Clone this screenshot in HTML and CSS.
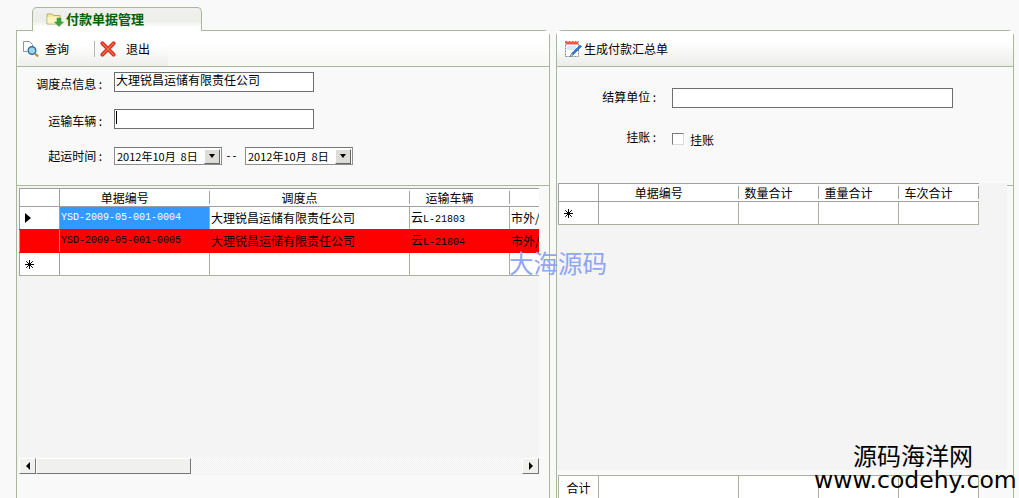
FILE: index.html
```html
<!DOCTYPE html>
<html lang="zh-CN">
<head>
<meta charset="utf-8">
<title>付款单据管理</title>
<link rel="stylesheet" href="styles.css">
</head>
<body>
<div class="page">
  <div class="tabs">
    <div class="tab">
      <svg class="ic16" viewBox="0 0 18 16"><path d="M1 3h5l1.500 1.500H14V13H1z" fill="#f7e89a" stroke="#b9ad6a"/><path d="M1.500 6h12v6.500h-12z" fill="#fdf6c4"/><path d="M11 7h4v4h2.500L13 15.500 8.500 11H11z" fill="#3da33d" stroke="#2c8a2c" stroke-width=".5"/></svg>
      <span>付款单据管理</span>
    </div>
  </div>
  <div class="columns">
    <section class="panel panel-left">
      <div class="toolbar">
        <div class="tools">
          <button class="tool tool-query">
            <svg class="ic16" viewBox="0 0 18 18"><path d="M1.500 1.500h6l3 3v3M1.500 1.500v10h4" fill="#fff" stroke="#8a96a8"/><circle cx="10" cy="10.500" r="3.800" fill="#9fd4f2" stroke="#2f6f9f" stroke-width="1.400"/><path d="M13 13.500l3 3" stroke="#b08a2a" stroke-width="2"/></svg>
            <span>查询</span>
          </button>
          <i class="tool-sep"></i>
          <button class="tool tool-exit">
            <svg class="ic16" viewBox="0 0 16 16"><path d="M3 3l10 10M13 3L3 13" stroke="#d8341c" stroke-width="3.600" stroke-linecap="round"/><path d="M3 3l10 10M13 3L3 13" stroke="#f47a55" stroke-width="1" stroke-linecap="round"/></svg>
            <span>退出</span>
          </button>
        </div>
      </div>
      <div class="form form-left">
        <div class="row row-a">
          <label class="lab lab-info">调度点信息&#8201;:</label>
          <div class="input">大理锐昌运储有限责任公司</div>
        </div>
        <div class="row row-b">
          <label class="lab lab-car">运输车辆&#8201;:</label>
          <div class="input"><i class="caret"></i></div>
        </div>
        <div class="row row-c">
          <label class="lab lab-date">起运时间&#8201;:</label>
          <div class="date"><span>2012年10月&nbsp; 8日</span><b class="drop"><i></i></b></div>
          <span class="dash">--</span>
          <div class="date"><span>2012年10月&nbsp; 8日</span><b class="drop"><i></i></b></div>
        </div>
      </div>
      <div class="grid-left">
        <div class="grid-clip">
          <table class="grid g-left">
            <colgroup><col class="c40"><col class="c150"><col class="c200"><col class="c100"><col class="c100"></colgroup>
            <tr class="hd"><th></th><th>单据编号</th><th>调度点</th><th>运输车辆</th><th></th></tr>
            <tr class="above-red"><td class="rh"><i class="arrow"></i></td><td class="code sel">YSD-2009-05-001-0004</td><td>大理锐昌运储有限责任公司</td><td>云<span class="mono">L-21803</span></td><td>市外/市内</td></tr>
            <tr class="red"><td class="rh"></td><td class="code">YSD-2009-05-001-0005</td><td>大理锐昌运储有限责任公司</td><td>云<span class="mono">L-21804</span></td><td>市外/市内</td></tr>
            <tr><td class="rh"><svg class="star" viewBox="0 0 9 9"><path d="M4.500 0v9M0 4.500h9M1.200 1.200l6.600 6.600M7.800 1.200L1.200 7.800" stroke="#000" stroke-width="1" fill="none"/></svg></td><td></td><td></td><td></td><td></td></tr>
          </table>
        </div>
        <div class="scrollbar">
          <b class="sb-btn"><i class="tri-l"></i></b>
          <b class="sb-thumb"></b>
          <b class="sb-track"></b>
          <b class="sb-btn"><i class="tri-r"></i></b>
        </div>
      </div>
    </section>

    <section class="panel panel-right">
      <div class="pane-head">
        <svg class="ic16" viewBox="0 0 18 18"><path d="M1.500 1.500h13v15h-13z" fill="#fff" stroke="#7c8794" stroke-dasharray="2 1"/><path d="M2 2h12v2.500H2z" fill="#ef5b3c"/><path d="M3 6h9v4H3z" fill="#d5e8f6"/><path d="M16 5l1.500 1.500L9 15l-3 1.500L7.500 13.500z" fill="#2f7fd8" stroke="#1c4f96" stroke-width=".6"/><path d="M7.500 13.500L6 16.500 9 15z" fill="#f0c040"/></svg>
        <span>生成付款汇总单</span>
      </div>
      <div class="form form-right">
        <div class="row row-d">
          <label class="lab lab-unit">结算单位&#8201;:</label>
          <div class="input input-wide"></div>
        </div>
        <div class="row row-e">
          <label class="lab lab-unit lab-hang">挂账&#8201;:</label>
          <i class="check"></i>
          <span class="check-text">挂账</span>
        </div>
      </div>
      <div class="right-body">
        <div class="grid-right">
          <table class="grid g-right">
            <colgroup><col class="c40"><col class="c140"><col class="c80"><col class="c80"><col class="c80"></colgroup>
            <tr class="hd"><th></th><th>单据编号</th><th class="l">数量合计</th><th class="l">重量合计</th><th class="l">车次合计</th></tr>
            <tr><td class="rh"><svg class="star" viewBox="0 0 9 9"><path d="M4.500 0v9M0 4.500h9M1.200 1.200l6.600 6.600M7.800 1.200L1.200 7.800" stroke="#000" stroke-width="1" fill="none"/></svg></td><td></td><td></td><td></td><td></td></tr>
          </table>
        </div>
        <i class="right-strip"></i>
      </div>
      <table class="grid summary">
        <colgroup><col class="c40"><col class="c140"><col class="c80"><col class="c80"><col class="c80"></colgroup>
        <tr><td class="sum-lab">合计</td><td></td><td></td><td></td><td></td></tr>
      </table>
    </section>
  </div>
  <div class="mark-blue">大海源码</div>
  <div class="mark-site"><div class="mark-cn">源码海洋网</div><div class="mark-url">www.codehy.com</div></div>
</div>
</body>
</html>
```
FILE: styles.css
```css
* { box-sizing: border-box; }
html, body { margin: 0; padding: 0; }
body { background: #f9f9f9; font-family: "Noto Sans CJK SC", "Liberation Sans", sans-serif; font-size: 12px; color: #000; }
.page { position: relative; width: 1019px; height: 498px; overflow: hidden; display: flex; flex-direction: column; }
.ic16 { width: 18px; height: 18px; flex: none; display: block; }

.tabs { height: 30px; padding: 7px 0 0 32px; flex: none; position: relative; z-index: 2; }
.tab { width: 170px; height: 24px; border: 1px solid #a9b89a; border-bottom: 0; border-radius: 5px 5px 0 0; background: linear-gradient(#f0f1ee 0, #eceeea 55%, #fff 85%); display: flex; align-items: center; gap: 2px; padding: 0 0 2px 13px; color: #056005; font-size: 13px; font-weight: 700; }

.columns { flex: 1; display: flex; gap: 6px; padding-left: 16px; min-height: 0; }
.panel { border: 1px solid #a9b89a; border-bottom: 0; height: 470px; display: flex; flex-direction: column; background: #f9f9f9; }
.panel-left { width: 534px; border-radius: 0 6px 0 0; }
.panel-right { width: 458px; border-radius: 6px 6px 0 0; }

.toolbar { height: 36px; border-bottom: 1px solid #a9b89a; background: linear-gradient(#fff 0, #fff 30%, #f7f7f5 100%); flex: none; }
.tools { width: 149px; height: 35px; margin-left: 2px; display: flex; align-items: center; background: linear-gradient(#fff 0, #fff 40%, #eeeeec 100%); }
.tool { border: 0; background: none; padding: 0; font: inherit; display: flex; align-items: center; }
.tool-query { width: 75px; padding-left: 3px; gap: 5px; }
.tool-sep { width: 1px; height: 16px; background: #b5b5b5; }
.tool-exit { padding-left: 4px; gap: 9px; }

.pane-head { height: 36px; border-bottom: 1px solid #a9b89a; display: flex; align-items: center; gap: 2px; padding: 0 0 0 7px; background: linear-gradient(#fff 0, #fff 30%, #ececea 100%); flex: none; }

.form { flex: none; height: 119px; position: relative; }
.form-left { padding: 5px 0 0 97px; border-bottom: 1px solid #a9b89a; }
.form-right { padding: 21px 0 0 115px; height: 116px; }
.row { display: flex; align-items: center; position: relative; }
.row-a { height: 20px; margin-bottom: 17px; }
.row-b { height: 20px; margin-bottom: 18px; }
.row-c { height: 18px; }
.row-d { height: 20px; margin-bottom: 25px; }
.row-e { height: 12px; }
.lab { position: absolute; right: 100%; margin-right: 12px; white-space: nowrap; line-height: 14px; }
.lab-info { top: 5px; }
.lab-car { top: 5px; }
.lab-date { top: 2px; }
.lab-unit { margin-right: 16px; top: 2px; }
.lab-hang { top: -3px; }
.input { width: 200px; height: 20px; border: 1px solid #6e6e6e; background: #fff; padding: 0 1px; line-height: 14px; white-space: nowrap; }
.input-wide { width: 281px; }
.caret { display: block; width: 1px; height: 13px; background: #000; margin-top: 1px; }
.date { width: 108px; height: 18px; border: 1px solid #8e8e8e; border-top-color: #777; background: #fff; display: flex; align-items: center; justify-content: space-between; padding: 0 1px 0 2px; font-size: 11px; white-space: nowrap; }
.drop { width: 16px; height: 15px; background: #dedcd6; border: 1px solid; border-color: #fff #666 #666 #fff; display: flex; align-items: center; justify-content: center; flex: none; }
.drop i { border: 3.500px solid transparent; border-top: 4px solid #000; border-bottom: 0; }
.dash { width: 23px; padding-right: 4px; text-align: center; font-family: "Liberation Mono", monospace; font-size: 10px; }
.check { width: 12px; height: 12px; background: #fff; border: 1px solid; border-color: #7b7b7b #dcdcdc #dcdcdc #7b7b7b; flex: none; }
.check-text { margin-left: 6px; position: relative; top: 1px; line-height: 14px; }

.grid-left { width: 522px; background: #f4f4f4; padding: 2px 0 0 2px; display: flex; flex-direction: column; min-height: 0; height: 289px; flex: none; }
.grid-clip { width: 520px; overflow: hidden; flex: 1; }
.grid { border-collapse: collapse; table-layout: fixed; background: #fff; }
.g-left { width: 590px; }
.g-right { width: 420px; }
.c40 { width: 40px; }
.c80 { width: 80px; }
.c100 { width: 100px; }
.c140 { width: 140px; }
.c150 { width: 150px; }
.c200 { width: 200px; }
.grid th { height: 18px; font-weight: 400; border-top: 1px solid #a0a0a0; border-bottom: 1px solid #a0a0a0; padding: 0 20px 0 0; line-height: 14px; text-align: center; overflow: hidden; white-space: nowrap; background-image: linear-gradient(#a0a0a0, #a0a0a0); background-size: 1px 13px; background-repeat: no-repeat; background-position: 100% 2px; }
.grid th:first-child { border-left: 1px solid #a0a0a0; border-right: 1px solid #a0a0a0; background-image: none; }
.grid th.l { text-align: left; padding: 0 0 0 6px; }
.grid td { height: 23px; border: 1px solid #a9b09c; padding: 0 1px; line-height: 14px; white-space: nowrap; overflow: hidden; }
.grid .rh { border-left-color: #a0a0a0; border-right-color: #a0a0a0; padding: 0 0 0 5px; }
.code { font-family: "Liberation Mono", monospace; font-size: 10px; color: #000; }
.mono { font-family: "Liberation Mono", monospace; font-size: 10px; }
.sel { background: #3399ff; color: #fff; }
.above-red td { border-bottom-color: #ff0000; }
.red td { background: #ff0000; border-color: #ff0000; height: 23px; }
.arrow { display: block; width: 0; height: 0; border: 5px solid transparent; border-left: 6px solid #000; border-right: 0; }
.star { width: 9px; height: 9px; display: block; }

.scrollbar { flex: none; height: 16px; margin: 0 0 1px 0; width: 520px; display: flex; }
.sb-btn { width: 17px; height: 16px; flex: none; background: #f0f0ee; border: 1px solid; border-color: #fff #777 #777 #fff; display: flex; align-items: center; justify-content: center; }
.sb-thumb { width: 155px; height: 16px; flex: none; background: #f0f0ee; border: 1px solid; border-color: #fff #777 #777 #fff; }
.sb-track { flex: 1; background-color: #f9f9f9; background-image: repeating-conic-gradient(#f2f2f2 0 25%, #fbfbfb 0 50%); background-size: 2px 2px; }
.tri-l { border: 4px solid transparent; border-right: 4px solid #000; border-left: 0; }
.tri-r { border: 4px solid transparent; border-left: 4px solid #000; border-right: 0; }

.right-body { flex: none; height: 287px; display: flex; }
.grid-right { width: 450px; height: 100%; background: #f4f4f4; padding-left: 1px; }
.right-strip { flex: 1; margin-top: 2px; border-top: 1px solid #a9b89a; }
.summary { width: 420px; margin: 5px 0 0 1px; border-top: 1px solid #a9b09c; }
.summary td { height: 24px; border-top: 1px solid #a9b09c; }
.sum-lab { text-align: center; }

.mark-blue { position: absolute; left: 509px; top: 247px; font-size: 24.500px; line-height: 32px; color: #8fa6f7; white-space: nowrap; }
.mark-site { position: absolute; left: 814px; top: 441px; width: 201px; white-space: nowrap; }
.mark-cn { font-size: 24px; line-height: 27px; margin-left: 39px; }
.mark-url { font-family: "DejaVu Sans", sans-serif; font-size: 23.500px; line-height: 25px; }
```
